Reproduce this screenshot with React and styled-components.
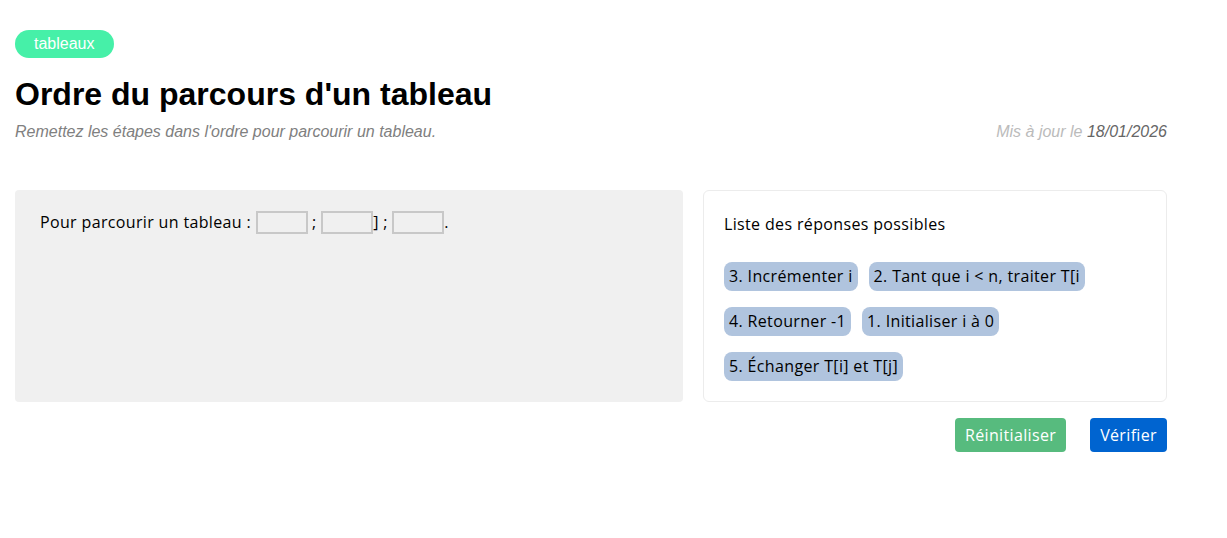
import styled, { createGlobalStyle } from "styled-components";

const GlobalStyle = createGlobalStyle`
  body {
    margin: 0;
    background: #ffffff;
    font-family: "Liberation Sans", Arial, sans-serif;
  }
`;

const chips = [
  ["3. Incrémenter i", "2. Tant que i < n, traiter T[i"],
  ["4. Retourner -1", "1. Initialiser i à 0"],
  ["5. Échanger T[i] et T[j]"],
];

const App = () => {
  return (
    <>
      <GlobalStyle />
      <Page>
        <Tag>tableaux</Tag>
        <Title>Ordre du parcours d'un tableau</Title>
        <SubRow>
          <Subtitle>Remettez les étapes dans l'ordre pour parcourir un tableau.</Subtitle>
          <Updated>
            Mis à jour le <DateText>18/01/2026</DateText>
          </Updated>
        </SubRow>

        <Board>
          <Exercise>
            <Sentence>
              Pour parcourir un tableau : <Slot /> ; <Slot />] ; <Slot />.
            </Sentence>
          </Exercise>
          <Answers>
            <AnswersTitle>Liste des réponses possibles</AnswersTitle>
            <ChipList>
              {chips.map((row, i) => (
                <ChipRow key={i}>
                  {row.map((c) => (
                    <Chip key={c}>{c}</Chip>
                  ))}
                </ChipRow>
              ))}
            </ChipList>
          </Answers>
        </Board>

        <Actions>
          <Button $color="#57bb7e">Réinitialiser</Button>
          <Button $color="#0064d0">Vérifier</Button>
        </Actions>
      </Page>
    </>
  );
};

export default App;

const Page = styled.div`
  width: 1152px;
  padding: 30px 0 0 15px;
`;

const Tag = styled.span`
  display: inline-block;
  height: 28px;
  padding: 0 19px;
  border-radius: 14px;
  background-color: #46f0a8;
  color: #ffffff;
  font-size: 16px;
  line-height: 28px;
`;

const Title = styled.h1`
  margin: 16px 0 0;
  font-size: 32px;
  font-weight: 700;
  line-height: 40px;
  color: #000000;
`;

const SubRow = styled.div`
  display: flex;
  justify-content: space-between;
  align-items: center;
  margin-top: 8px;
  font-size: 16px;
  font-style: italic;
  line-height: 20px;
`;

const Subtitle = styled.p`
  margin: 0;
  color: #808080;
`;

const Updated = styled.span`
  color: #bbbbbb;
`;

const DateText = styled.span`
  color: #666666;
`;

const Board = styled.div`
  display: flex;
  gap: 20px;
  margin-top: 48px;
  font-family: "Open Sans", sans-serif;
  letter-spacing: 0.35px;
  color: #000000;
`;

const Exercise = styled.div`
  flex: 1;
  height: 212px;
  box-sizing: border-box;
  padding: 20px 25px;
  border-radius: 4px;
  background-color: #f0f0f0;
`;

const Sentence = styled.div`
  font-size: 16px;
  line-height: 24px;
`;

const Slot = styled.span`
  display: inline-block;
  width: 48px;
  height: 19px;
  vertical-align: middle;
  border: 2px solid #c8c8c8;
  margin-top: -3px;
`;

const Answers = styled.div`
  width: 464px;
  height: 212px;
  box-sizing: border-box;
  padding: 22px 20px;
  border: 1px solid #ececec;
  border-radius: 6px;
  background-color: #ffffff;
`;

const AnswersTitle = styled.div`
  font-size: 16px;
  line-height: 22px;
`;

const ChipList = styled.div`
  display: flex;
  flex-direction: column;
  gap: 16px;
  margin-top: 27px;
`;

const ChipRow = styled.div`
  display: flex;
  gap: 11px;
`;

const Chip = styled.span`
  height: 29px;
  padding: 0 5px;
  border-radius: 8px;
  background-color: #b0c4de;
  font-size: 16px;
  line-height: 29px;
  white-space: nowrap;
`;

const Actions = styled.div`
  display: flex;
  justify-content: flex-end;
  gap: 24px;
  margin-top: 16px;
`;

const Button = styled.button`
  height: 34px;
  padding: 0 10px;
  border: none;
  border-radius: 4px;
  background-color: ${(props) => props.$color};
  color: #ffffff;
  font-family: "Open Sans", sans-serif;
  font-size: 16px;
  letter-spacing: 0.35px;
`;
